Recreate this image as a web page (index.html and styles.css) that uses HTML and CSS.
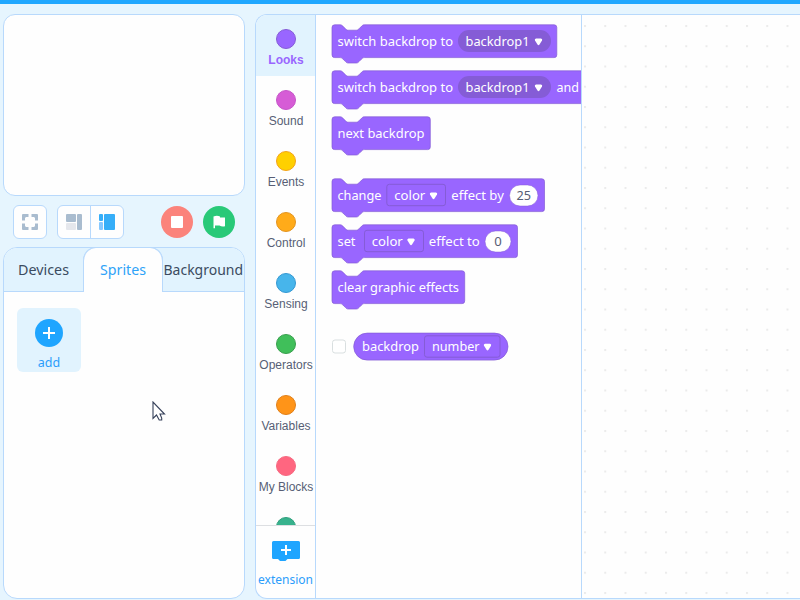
FILE: index.html
```html
<!DOCTYPE html>
<html lang="en">
<head>
<meta charset="utf-8">
<title>Block editor</title>
<link rel="stylesheet" href="styles.css">
</head>
<body>
<div class="app">
  <aside class="left">
    <div class="stage"></div>
    <div class="controls">
      <button class="btn" aria-label="Full screen"><svg width="16" height="16" viewBox="0 0 16 16"><path d="M0 6.500V1Q0 0 1 0H6.500V3H4L3 4V6.500ZM9.500 0H15Q16 0 16 1V6.500H13V4L12 3H9.500ZM0 9.500H3V12L4 13H6.500V16H1Q0 16 0 15ZM13 9.500H16V15Q16 16 15 16H9.500V13H12L13 12Z" fill="#a9bccf"/></svg></button>
      <div class="group">
        <button class="seg" aria-label="Small stage"><svg width="16" height="16"><rect width="10" height="8" rx="1" fill="#a9bccf"/><rect y="9" width="10" height="7" rx="1" fill="#e5e7ec"/><rect x="11" width="5" height="16" rx="1" fill="#a9bccf"/></svg></button>
        <button class="seg" aria-label="Large workspace"><svg width="16" height="16"><rect width="4" height="7" rx="1" fill="#36aef8"/><rect y="8" width="4" height="8" rx="1" fill="#86c8ff"/><rect x="5" width="11" height="16" rx="1" fill="#36aef8"/></svg></button>
      </div>
      <button class="round stop" aria-label="Stop"><svg width="32" height="32"><rect x="10" y="10" width="12" height="12" rx="1" fill="#fff"/></svg></button>
      <button class="round go" aria-label="Go"><svg width="32" height="32"><path d="M10.500 10.500Q14 9 17 10.500V11.500H22V20.300Q18.500 21 16.500 19.500H12V22.300H10.500Z" fill="#fff"/></svg></button>
    </div>
    <section class="assets">
      <nav class="tabs">
        <a class="tab first"><svg width="79" height="28"><text x="14" y="19" textLength="51" lengthAdjust="spacingAndGlyphs">Devices</text></svg></a>
        <a class="tab active"><svg width="78" height="28"><text x="16" y="19" textLength="46" lengthAdjust="spacingAndGlyphs">Sprites</text></svg></a>
        <a class="tab last"><svg width="81" height="28"><text x="0.500" y="19" textLength="79.500" lengthAdjust="spacingAndGlyphs">Background</text></svg></a>
      </nav>
      <div class="add">
        <svg width="28" height="28"><circle cx="14" cy="14" r="14" fill="#1fa5ff"/><path d="M8 14H20M14 8V20" stroke="#fff" stroke-width="2"/></svg>
        <span>add</span>
      </div>
    </section>
  </aside>
  <main class="editor">
    <div class="toolbox">
      <div class="cats">
        <div class="cat on"><i class="dot looks"></i>Looks</div>
        <div class="cat"><i class="dot sound"></i>Sound</div>
        <div class="cat"><i class="dot events"></i>Events</div>
        <div class="cat"><i class="dot control"></i>Control</div>
        <div class="cat"><i class="dot sensing"></i>Sensing</div>
        <div class="cat"><i class="dot operators"></i>Operators</div>
        <div class="cat"><i class="dot variables"></i>Variables</div>
        <div class="cat"><i class="dot mine"></i>My Blocks</div>
        <div class="cat"><i class="dot more"></i></div>
      </div>
      <div class="ext">
        <svg width="28" height="21"><path d="M1.500 0H26.500Q28 0 28 1.500V16.500Q28 18 26.500 18H15.500L13.500 20H8L6 18H1.500Q0 18 0 16.500V1.500Q0 0 1.500 0Z" fill="#1fa5ff"/><path d="M9 9H19M14 4V14" stroke="#fff" stroke-width="2"/></svg>
        <svg class="extlabel" width="59" height="18"><text x="2" y="13" textLength="55" lengthAdjust="spacingAndGlyphs">extension</text></svg>
      </div>
    </div>
    <div class="flyout">
      <svg width="0" height="0" class="defs"><defs>
        <path id="arrow" d="M1.500 0H6.500Q8.300 .300 7.500 2L5 6Q4 7.500 3 6L.500 2Q-.300 .300 1.500 0Z" fill="#fff"/>
      </defs></svg>
      <svg class="block" width="250" height="46"><path class="body" d="M.7 3.400A2.700 2.700 0 0 1 3.400.7H8.800C10.200.7 10.800 1.400 11.500 2L14.200 4.700C14.900 5.400 15.500 6.100 16.900 6.100H25C26.400 6.100 27 5.400 27.700 4.700L30.400 2C31.100 1.400 31.700.7 33.100.7H222.800A2.700 2.700 0 0 1 225.500 3.400V30.800A2.700 2.700 0 0 1 222.800 33.500H33.100C31.700 33.500 31.100 34.200 30.400 34.800L27.700 37.500C27 38.200 26.400 38.900 25 38.900H16.900C15.500 38.900 14.900 38.200 14.200 37.500L11.500 34.800C10.800 34.200 10.200 33.500 8.800 33.500H3.400A2.700 2.700 0 0 1 .7 30.800Z"/>
        <rect class="pill" x="127" y="6" width="93" height="22" rx="11"/><text x="6.500" y="22.200" textLength="115.500" lengthAdjust="spacingAndGlyphs">switch backdrop to</text><text x="134.500" y="22.200" textLength="64" lengthAdjust="spacingAndGlyphs">backdrop1</text><use href="#arrow" x="203.500" y="14.500"/></svg>
      <svg class="block" width="250" height="46"><path class="body" d="M.7 3.400A2.700 2.700 0 0 1 3.400.7H8.800C10.200.7 10.800 1.400 11.500 2L14.200 4.700C14.900 5.400 15.500 6.100 16.900 6.100H25C26.400 6.100 27 5.400 27.700 4.700L30.400 2C31.100 1.400 31.700.7 33.100.7H260V33.500H33.100C31.700 33.500 31.100 34.200 30.400 34.800L27.700 37.500C27 38.200 26.400 38.900 25 38.900H16.900C15.500 38.900 14.900 38.200 14.200 37.500L11.500 34.800C10.800 34.200 10.200 33.500 8.800 33.500H3.400A2.700 2.700 0 0 1 .7 30.800Z"/>
        <rect class="pill" x="127" y="6" width="93" height="22" rx="11"/><text x="6.500" y="22.200" textLength="115.500" lengthAdjust="spacingAndGlyphs">switch backdrop to</text><text x="134.500" y="22.200" textLength="64" lengthAdjust="spacingAndGlyphs">backdrop1</text><use href="#arrow" x="203.500" y="14.500"/><text x="225.500" y="22.200" textLength="22.500" lengthAdjust="spacingAndGlyphs">and</text></svg>
      <svg class="block gap" width="250" height="46"><path class="body" d="M.7 3.400A2.700 2.700 0 0 1 3.400.7H8.800C10.200.7 10.800 1.400 11.500 2L14.200 4.700C14.900 5.400 15.500 6.100 16.900 6.100H25C26.400 6.100 27 5.400 27.700 4.700L30.400 2C31.100 1.400 31.700.7 33.100.7H96.300A2.700 2.700 0 0 1 99 3.400V30.800A2.700 2.700 0 0 1 96.300 33.500H33.100C31.700 33.500 31.100 34.200 30.400 34.800L27.700 37.500C27 38.200 26.400 38.900 25 38.900H16.900C15.500 38.900 14.900 38.200 14.200 37.500L11.500 34.800C10.800 34.200 10.200 33.500 8.800 33.500H3.400A2.700 2.700 0 0 1 .7 30.800Z"/>
        <text x="6.500" y="22.200" textLength="87" lengthAdjust="spacingAndGlyphs">next backdrop</text></svg>
      <svg class="block" width="250" height="46"><path class="body" d="M.7 3.400A2.700 2.700 0 0 1 3.400.7H8.800C10.200.7 10.800 1.400 11.500 2L14.200 4.700C14.900 5.400 15.500 6.100 16.900 6.100H25C26.400 6.100 27 5.400 27.700 4.700L30.400 2C31.100 1.400 31.700.7 33.100.7H210.500A2.700 2.700 0 0 1 213.200 3.400V30.800A2.700 2.700 0 0 1 210.500 33.500H33.100C31.700 33.500 31.100 34.200 30.400 34.800L27.700 37.500C27 38.200 26.400 38.900 25 38.900H16.900C15.500 38.900 14.900 38.200 14.200 37.500L11.500 34.800C10.800 34.200 10.200 33.500 8.800 33.500H3.400A2.700 2.700 0 0 1 .7 30.800Z"/>
        <rect class="drop" x="55.800" y="6.300" width="58.700" height="21.400" rx="2.500"/><rect class="num" x="178.500" y="7" width="28.500" height="21" rx="10.500"/><text x="6.500" y="22.200" textLength="44" lengthAdjust="spacingAndGlyphs">change</text><text x="63.300" y="22.200" textLength="31" lengthAdjust="spacingAndGlyphs">color</text><use href="#arrow" x="98.500" y="14.500"/><text x="120.300" y="22.200" textLength="52.500" lengthAdjust="spacingAndGlyphs">effect by</text><text class="dark" x="185.500" y="22.200" textLength="14.500" lengthAdjust="spacingAndGlyphs">25</text></svg>
      <svg class="block" width="250" height="46"><path class="body" d="M.7 3.400A2.700 2.700 0 0 1 3.400.7H8.800C10.200.7 10.800 1.400 11.500 2L14.200 4.700C14.900 5.400 15.500 6.100 16.900 6.100H25C26.400 6.100 27 5.400 27.700 4.700L30.400 2C31.100 1.400 31.700.7 33.100.7H183.500A2.700 2.700 0 0 1 186.200 3.400V30.800A2.700 2.700 0 0 1 183.500 33.500H33.100C31.700 33.500 31.100 34.200 30.400 34.800L27.700 37.500C27 38.200 26.400 38.900 25 38.900H16.900C15.500 38.900 14.900 38.200 14.200 37.500L11.500 34.800C10.800 34.200 10.200 33.500 8.800 33.500H3.400A2.700 2.700 0 0 1 .7 30.800Z"/>
        <rect class="drop" x="33.500" y="6.300" width="59" height="21.400" rx="2.500"/><rect class="num" x="154" y="7" width="26" height="21" rx="10.500"/><text x="6.500" y="22.200" textLength="18" lengthAdjust="spacingAndGlyphs">set</text><text x="40.800" y="22.200" textLength="31" lengthAdjust="spacingAndGlyphs">color</text><use href="#arrow" x="76" y="14.500"/><text x="97.800" y="22.200" textLength="51" lengthAdjust="spacingAndGlyphs">effect to</text><text class="dark" x="163.300" y="22.200" textLength="7.500" lengthAdjust="spacingAndGlyphs">0</text></svg>
      <svg class="block" width="250" height="46"><path class="body" d="M.7 3.400A2.700 2.700 0 0 1 3.400.7H8.800C10.200.7 10.800 1.400 11.500 2L14.200 4.700C14.900 5.400 15.500 6.100 16.900 6.100H25C26.400 6.100 27 5.400 27.700 4.700L30.400 2C31.100 1.400 31.700.7 33.100.7H130.700A2.700 2.700 0 0 1 133.400 3.400V30.800A2.700 2.700 0 0 1 130.700 33.500H33.100C31.700 33.500 31.100 34.200 30.400 34.800L27.700 37.500C27 38.200 26.400 38.900 25 38.900H16.900C15.500 38.900 14.900 38.200 14.200 37.500L11.500 34.800C10.800 34.200 10.200 33.500 8.800 33.500H3.400A2.700 2.700 0 0 1 .7 30.800Z"/>
        <text x="6.500" y="22.200" textLength="121.500" lengthAdjust="spacingAndGlyphs">clear graphic effects</text></svg>
      <svg class="block reporter" width="250" height="30"><rect x="1.500" y="8" width="13" height="13" rx="2.500" fill="#fff" stroke="#d9dfe0"/><rect class="body" x="22.400" y="1" width="154.300" height="27" rx="13.500"/><rect class="drop" x="93.500" y="3.800" width="75.500" height="21.400" rx="2.500"/><text x="31" y="19.300" textLength="57" lengthAdjust="spacingAndGlyphs">backdrop</text><text x="101" y="19.300" textLength="47.500" lengthAdjust="spacingAndGlyphs">number</text><use href="#arrow" x="152.500" y="11.700"/></svg>
    </div>
    <div class="workspace">
      <svg width="218" height="583"><defs><pattern id="grid" x="2" y="10" width="20.250" height="20.250" patternUnits="userSpaceOnUse"><rect width="2" height="2" fill="#ebebeb"/></pattern></defs><rect width="218" height="583" fill="url(#grid)"/></svg>
    </div>
  </main>
  <svg class="cursor" width="14" height="21" viewBox="0 0 14 21"><path d="M1 1V17.500L4.500 14L7.200 19H9.700V17L8 13H12.500Z" fill="#fff" stroke="#36415a" stroke-width="1.100"/></svg>
</div>
</body>
</html>
```
FILE: styles.css
```css
* { box-sizing: border-box; }
body { margin: 0; font-family: "Liberation Sans", Arial, sans-serif; }
svg { display: block; }
button { padding: 0; margin: 0; border: 0; background: none; }
.app {
  position: relative;
  width: 800px;
  height: 600px;
  overflow: hidden;
  display: flex;
  gap: 10px;
  padding: 10px 0 1px 3px;
  border-top: 4px solid #1fa7ff;
  background: #e6f5fe;
}
.left { width: 242px; flex: none; display: flex; flex-direction: column; }
.stage { height: 182px; background: #fefefe; border: 1px solid #b8d9fc; border-radius: 12px; }
.controls { height: 51px; padding: 0 10px; display: flex; align-items: center; }
.btn {
  width: 34px;
  height: 34px;
  display: grid;
  place-items: center;
  background: #fefefe;
  border: 1px solid #b8d9fc;
  border-radius: 6px;
}
.group {
  width: 67px;
  height: 34px;
  margin-left: 10px;
  display: flex;
  background: #fefefe;
  border: 1px solid #b8d9fc;
  border-radius: 6px;
}
.seg { flex: 1; display: grid; place-items: center; }
.seg + .seg { border-left: 1px solid #b8d9fc; }
.round { width: 32px; height: 32px; border-radius: 50%; }
.stop { margin-left: 37px; background: #fb837b; }
.go { margin-left: 10px; background: #29c978; }
.assets { height: 352px; background: #fefefe; border: 1px solid #b8d9fc; border-radius: 14px; overflow: hidden; }
.tabs { height: 44px; display: flex; background: #e1f3fe; }
.tab { flex: none; padding-top: 8px; border-bottom: 1px solid #b8d9fc; }
.tab text { font: 15px "Noto Sans", sans-serif; fill: #3b4b60; }
.first { width: 79px; }
.active {
  width: 80px;
  background: #fefefe;
  border: 1px solid #b8d9fc;
  border-width: 0 1px;
  border-radius: 13px 13px 0 0;
  box-shadow: 0 -1px 0 #b8d9fc;
}
.tab.active text { fill: #2fa3f8; }
.last { width: 81px; }
.add {
  width: 64px;
  height: 64px;
  margin: 16px 0 0 13px;
  padding-top: 11px;
  display: flex;
  flex-direction: column;
  align-items: center;
  gap: 7px;
  border-radius: 6px;
  background: #e1f3fe;
  color: #2b9dfb;
  font: 12.5px/18px "Noto Sans", sans-serif;
}
.editor {
  flex: 1;
  height: 585px;
  display: flex;
  background: #fefefe;
  border: 1px solid #b8d9fc;
  border-right: 0;
  border-radius: 12px 0 0 12px;
  overflow: hidden;
}
.toolbox { width: 60px; flex: none; border-right: 1px solid #b8d9fc; }
.cats { height: 510px; overflow: hidden; }
.cat {
  height: 61px;
  padding: 14px 0 0 1px;
  display: flex;
  flex-direction: column;
  align-items: center;
  gap: 4px;
  font-size: 12px;
  line-height: 14px;
  white-space: nowrap;
  color: #575e75;
}
.on { background: #e1f3fe; color: #9966ff; font-weight: bold; }
.dot { width: 20px; height: 20px; flex: none; border-radius: 50%; border: 1px solid; }
.looks { background: #9966ff; border-color: #855cd6; }
.sound { background: #d65cd6; border-color: #c655c9; }
.events { background: #ffd000; border-color: #f3a319; }
.control { background: #ffab19; border-color: #e39420; }
.sensing { background: #47b5eb; border-color: #3398d3; }
.operators { background: #40bf5a; border-color: #389f4d; }
.variables { background: #ff9418; border-color: #e18019; }
.mine { background: #ff6680; border-color: #f66a81; }
.more { background: #38b28d; border-color: #2f9f7d; }
.ext { height: 73px; border-top: 1px solid #dddfe2; padding-top: 15px; display: flex; flex-direction: column; align-items: center; gap: 9px; }
.extlabel text { font: 12.5px "Noto Sans", sans-serif; fill: #2b9dfb; }
.flyout { width: 266px; flex: none; padding: 9px 0 0 15px; overflow: hidden; border-right: 1px solid #b8d9fc; }
.defs { height: 0; }
.gap { margin-bottom: 16px; }
.reporter { margin-top: 16px; }
.block text { font: 13.2px "Noto Sans", sans-serif; fill: #fff; }
.block .dark { fill: #575e75; }
.body { fill: #9966ff; stroke: #855cd6; stroke-width: .7; transform: translate(.3px, .1px); }
.pill { fill: #855cd6; }
.drop { fill: none; stroke: #855cd6; stroke-width: 1; }
.num { fill: #fff; stroke: #855cd6; stroke-width: .5; }
.workspace { flex: 1; overflow: hidden; }
.cursor { position: absolute; left: 152px; top: 397px; }
```
